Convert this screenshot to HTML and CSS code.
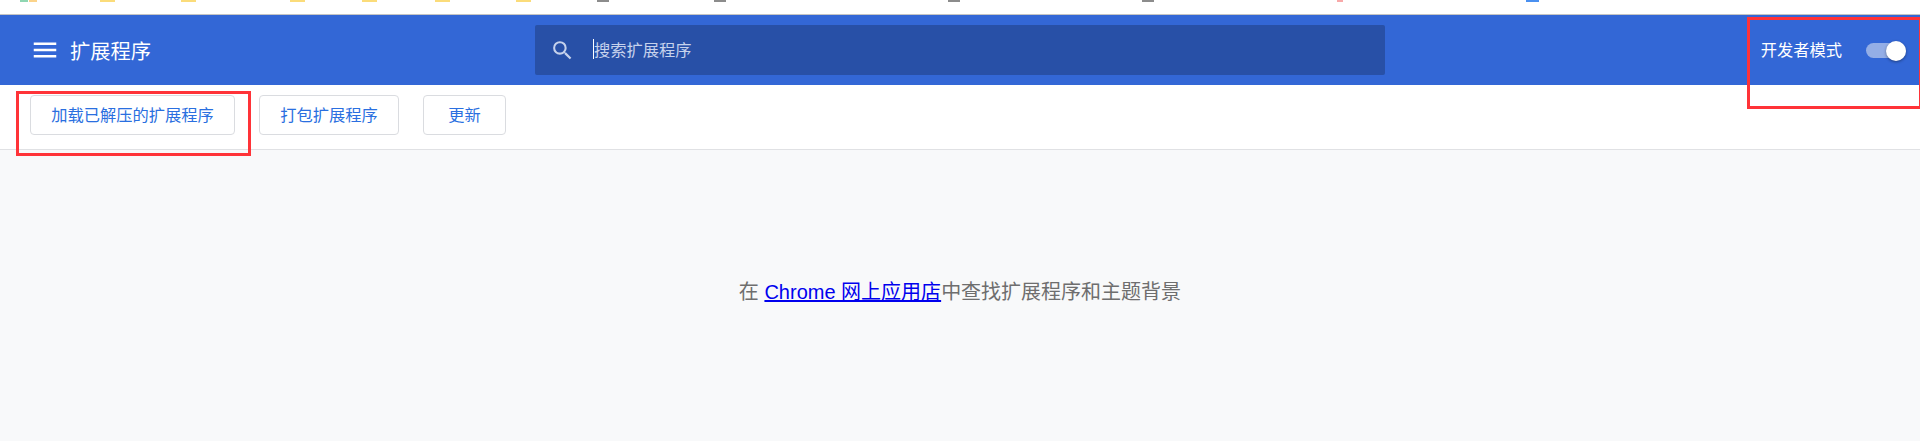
FILE: index.html
```html
<!DOCTYPE html>
<html lang="zh-CN">
<head>
  <meta charset="UTF-8">
  <meta name="viewport" content="width=device-width, initial-scale=1.0">
  <title>扩展程序</title>
  <link rel="stylesheet" href="styles.css">
</head>
<body>

  <div class="bookmarks">
    <span class="fav fav-green"></span>
    <span class="fav fav-orange"></span>
    <span class="fav fav-folder"></span>
    <span class="fav fav-folder"></span>
    <span class="fav fav-folder"></span>
    <span class="fav fav-folder"></span>
    <span class="fav fav-folder"></span>
    <span class="fav fav-folder"></span>
    <span class="fav fav-page"></span>
    <span class="fav fav-page"></span>
    <span class="fav fav-page"></span>
    <span class="fav fav-page"></span>
    <span class="fav fav-red"></span>
    <span class="fav fav-blue"></span>
  </div>

  <header class="toolbar">
    <div class="toolbar-left">
      <svg class="menu-icon" width="30" height="30" viewBox="0 0 24 24" aria-hidden="true"><path d="M3 18h18v-2H3v2zm0-5h18v-2H3v2zm0-7v2h18V6H3z"/></svg>
      <h1 class="title">扩展程序</h1>
    </div>
    <div class="search">
      <svg class="search-icon" width="25" height="25" viewBox="0 0 24 24" aria-hidden="true"><path d="M15.5 14h-.79l-.28-.27A6.47 6.47 0 0 0 16 9.5 6.5 6.5 0 1 0 9.5 16c1.61 0 3.09-.59 4.23-1.57l.27.28v.79l5 4.99L20.49 19l-4.99-5zm-6 0C7.01 14 5 11.99 5 9.5S7.01 5 9.5 5 14 7.01 14 9.5 11.99 14 9.5 14z"/></svg>
      <span class="caret"></span>
      <span class="search-text">搜索扩展程序</span>
    </div>
    <div class="dev-mode">
      <span class="dev-label">开发者模式</span>
      <span class="toggle"><span class="knob"></span></span>
    </div>
  </header>

  <div class="actions">
    <button class="btn btn-load">加载已解压的扩展程序</button>
    <button class="btn btn-pack">打包扩展程序</button>
    <button class="btn btn-update">更新</button>
  </div>

  <main class="empty">
    <p>在 <a href="#">Chrome 网上应用店</a>中查找扩展程序和主题背景</p>
  </main>

  <div class="mark mark-load"></div>
  <div class="mark mark-dev"></div>

</body>
</html>
```

FILE: styles.css
```css
* {
  box-sizing: border-box;
}

body {
  margin: 0;
  height: 441px;
  overflow: hidden;
  position: relative;
  display: flex;
  flex-direction: column;
  font-family: "Liberation Sans", "Noto Sans CJK SC", sans-serif;
  background-color: #f8f9fa;
}

/* bookmark bar, only the bottom of the icons is still visible */
.bookmarks {
  height: 15px;
  display: flex;
  align-items: flex-start;
  background-color: #fff;
  border-bottom: 1px solid #c4c4c4;
}

.fav {
  height: 2px;
}

.fav-green {
  width: 8px;
  margin-left: 20px;
  background-color: #8fd6b2;
}

.fav-orange {
  width: 8px;
  margin-left: 1px;
  background-color: #fbd38a;
}

.fav-folder {
  width: 15px;
  background-color: #fbdc7a;
}

.fav-page {
  width: 12px;
  background-color: #8c8c8c;
}

.fav-red {
  width: 6px;
  margin-left: 183px;
  background-color: #f8a9a9;
}

.fav-blue {
  width: 13px;
  margin-left: 183px;
  background-color: #4a90f0;
}

.fav:nth-child(3) { margin-left: 63px; }
.fav:nth-child(4) { margin-left: 66px; }
.fav:nth-child(5) { margin-left: 94px; }
.fav:nth-child(6) { margin-left: 57px; }
.fav:nth-child(7) { margin-left: 58px; }
.fav:nth-child(8) { margin-left: 66px; }
.fav:nth-child(9) { margin-left: 66px; }
.fav:nth-child(10) { margin-left: 105px; }
.fav:nth-child(11) { margin-left: 222px; }
.fav:nth-child(12) { margin-left: 182px; }

.toolbar {
  height: 70px;
  display: flex;
  align-items: center;
  background-color: #3367d6;
  color: #fff;
}

.toolbar-left {
  width: 535px;
  padding-left: 30px;
  display: flex;
  align-items: center;
}

.menu-icon {
  fill: #fff;
}

.title {
  margin: 0 0 0 10px;
  font-size: 20.3px;
  font-weight: 400;
}

.search {
  width: 850px;
  height: 50px;
  padding-left: 15px;
  display: flex;
  align-items: center;
  background-color: #2850a7;
  border-radius: 2px;
  color: #c6d2ec;
}

.search-icon {
  fill: #c6d2ec;
}

.caret {
  width: 1px;
  height: 20px;
  margin-left: 18px;
  margin-top: -2px;
  background-color: #fff;
}

.search-text {
  margin-top: -3px;
  font-size: 16.25px;
}

.dev-mode {
  margin-left: auto;
  padding-right: 14px;
  display: flex;
  align-items: center;
}

.dev-label {
  margin-top: -2px;
  font-size: 16.25px;
}

.toggle {
  width: 40px;
  height: 15px;
  margin-left: 24px;
  position: relative;
  background-color: #94aee6;
  border-radius: 8px;
}

.knob {
  position: absolute;
  top: -2px;
  right: 0;
  width: 20px;
  height: 20px;
  background-color: #fff;
  border-radius: 50%;
  box-shadow: 0 1px 3px rgba(0, 0, 0, 0.4);
}

.actions {
  height: 65px;
  padding: 10px 0 0 30px;
  display: flex;
  align-items: flex-start;
  gap: 24px;
  background-color: #fff;
  border-bottom: 1px solid #e0e1e4;
}

.btn {
  height: 40px;
  padding: 0 0 3px;
  background-color: #fff;
  border: 1px solid #dadce0;
  border-radius: 4px;
  color: #2a6fe0;
  font-family: inherit;
  font-size: 16.25px;
}

.btn-load {
  width: 205px;
}

.btn-pack {
  width: 140px;
}

.btn-update {
  width: 83px;
}

.empty {
  flex: 1;
  padding-top: 126px;
  text-align: center;
  color: #6e6e6e;
  font-size: 20px;
}

.empty p {
  margin: 0;
}

.empty a {
  color: #0000ee;
}

.mark {
  position: absolute;
  border: 3px solid #ff3338;
}

.mark-load {
  left: 16px;
  top: 91px;
  width: 235px;
  height: 65px;
}

.mark-dev {
  left: 1747px;
  top: 17px;
  width: 175px;
  height: 92px;
}
```
